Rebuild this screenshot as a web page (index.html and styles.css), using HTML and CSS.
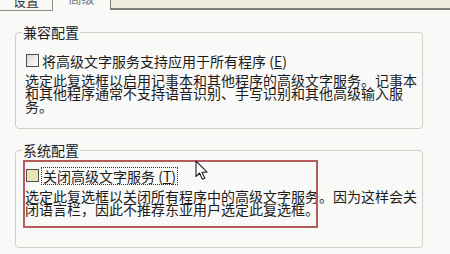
FILE: index.html
```html
<!doctype html>
<html>

<head>
    <meta charset="utf-8">
    <meta name="viewport" content="width=device-width, initial-scale=1.0">
    <title>高级</title>
    <link rel="stylesheet" href="styles.css">
</head>

<body>
    <!-- 顶部标签 -->
    <div class="tabs">
        <div class="tab">设置</div>
        <div class="tab active">高级</div>
        <div class="tab-field"></div>
    </div>

    <!-- 兼容配置 -->
    <fieldset class="group group-1">
        <legend>兼容配置</legend>
        <label class="check"><span class="box"></span>将高级文字服务支持应用于所有程序 (<u>E</u>)</label>
        <p class="desc">选定此复选框以启用记事本和其他程序的高级文字服务。记事本<br>和其他程序通常不支持语音识别、手写识别和其他高级输入服<br>务。</p>
    </fieldset>

    <!-- 系统配置 -->
    <fieldset class="group group-2">
        <legend>系统配置</legend>
        <label class="check"><span class="box hot"></span><span class="focus">关闭高级文字服务 (<u>T</u>)</span></label>
        <p class="desc">选定此复选框以关闭所有程序中的高级文字服务。因为这样会关<br>闭语言栏，因此不推荐东亚用户选定此复选框。</p>
    </fieldset>

    <!-- 截图上的标注框和鼠标 -->
    <div class="mark"></div>
    <svg class="pointer" width="14" height="20" viewBox="0 0 14 20">
        <path d="M1 1 L1 16.5 L4.6 13 L7.4 19.2 L9.8 18.2 L7 12.2 L12 12.2 Z" fill="#fff" stroke="#222" stroke-width="1.1" stroke-linejoin="round"/>
    </svg>
</body>

</html>
```

FILE: styles.css
```css
body {
    margin: 0;
    padding: 0;
    background: #f9f9f7;
    color: #1b1b1b;
    font-family: "Noto Sans CJK SC", "DejaVu Sans", sans-serif;
    font-size: 14px;
}

.tabs {
    display: flex;
    height: 11px;
    overflow: hidden;
}

.tab {
    width: 53px;
    height: 17px;
    line-height: 14px;
    font-size: 13px;
    text-align: center;
    border-right: 1px solid #8e8e86;
    border-bottom: 1px solid #8e8e86;
    box-sizing: border-box;
    margin-top: -6px;
    color: #333;
}

.tab.active {
    width: 57px;
    border: none;
    color: #777;
    margin-top: -9px;
}

.tab-field {
    flex: 1;
    height: 10px;
    box-sizing: border-box;
    background: #efecdd;
    border-left: 1px solid #7c7c74;
    border-bottom: 2px solid #7e7e76;
}

.group {
    width: 408px;
    box-sizing: border-box;
    margin: 14px 0 0 15px;
    padding: 0 0 0 9px;
    border: 1px solid #cfcfc6;
    border-radius: 4px;
}

.group-1 {
    height: 104px;
}

.group-2 {
    height: 105px;
}

.group legend {
    margin-left: -3px;
    padding: 0 1px;
    line-height: 14px;
    color: #222;
}

.check {
    display: flex;
    align-items: center;
    height: 15px;
    margin-top: 14px;
}

.group-2 .check {
    height: 17px;
    margin-top: 10px;
}

.box {
    width: 13px;
    height: 13px;
    margin: 0 3px 0 1px;
    border: 1px solid #4e4e4e;
    background: linear-gradient(135deg, #dcdcd6, #fbfbf9);
    box-sizing: border-box;
}

.box.hot {
    background: #ece2b4;
}

.focus {
    outline: 1px dotted #333;
    line-height: 16px;
    padding: 0 1px;
}

.desc {
    margin: 6px 0 0 0;
    line-height: 13px;
}

.mark {
    position: absolute;
    left: 23px;
    top: 160px;
    width: 295px;
    height: 68px;
    box-sizing: border-box;
    border: 2px solid #b65a5e;
}

.pointer {
    position: absolute;
    left: 195px;
    top: 160px;
}
```
